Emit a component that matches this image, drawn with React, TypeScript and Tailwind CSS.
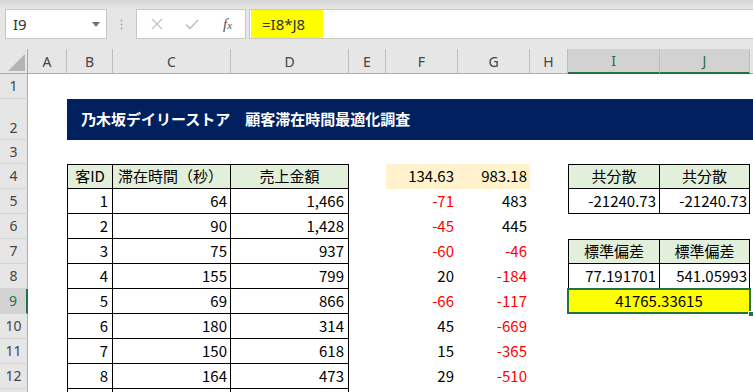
import React from 'react';

const GRID = 'grid grid-cols-[28px_39px_46px_118px_118px_37px_72px_72px_38px_92px_90px_3px]';
const JP = "font-['Noto_Sans_CJK_JP','Noto_Sans',sans-serif]";
const UI = "font-['Noto_Sans','Open_Sans',sans-serif]";

const rows = [
  { id: '1', sec: '64', amt: '1,466', f: '-71', g: '483' },
  { id: '2', sec: '90', amt: '1,428', f: '-45', g: '445' },
  { id: '3', sec: '75', amt: '937', f: '-60', g: '-46' },
  { id: '4', sec: '155', amt: '799', f: '20', g: '-184' },
  { id: '5', sec: '69', amt: '866', f: '-66', g: '-117' },
  { id: '6', sec: '180', amt: '314', f: '45', g: '-669' },
  { id: '7', sec: '150', amt: '618', f: '15', g: '-365' },
  { id: '8', sec: '164', amt: '473', f: '29', g: '-510' },
];

const Cell = ({
  children,
  className = '',
  color = 'text-black',
}: {
  children?: React.ReactNode;
  className?: string;
  color?: string;
}) => (
  <div className={`flex items-center overflow-hidden whitespace-nowrap ${JP} text-[15px] ${color} ${className}`}>
    {children}
  </div>
);

const RowHead = ({ n, selected = false, tall = false }: { n: string; selected?: boolean; tall?: boolean }) => (
  <div
    className={`flex justify-center ${tall ? 'items-end pb-[1px]' : 'items-center'} border-b border-[#d4d4d4] ${UI} text-[14px] leading-[20px] ${
      selected ? 'bg-[#d2d2d2] text-[#217346] border-r-2 border-r-[#217346]' : 'bg-[#e6e6e6] text-[#444] border-r border-r-[#ababab]'
    }`}
  >
    {n}
  </div>
);

const neg = (v: string) => (v.startsWith('-') ? 'text-[#ff0000]' : 'text-black');

const ColHead = ({ l, selected = false }: { l: string; selected?: boolean }) => (
  <div
    className={`flex items-center justify-center border-r border-[#bdbdbd] ${UI} text-[14px] ${
      selected ? 'bg-[#d2d2d2] text-[#217346] border-b-2 border-b-[#217346]' : 'bg-[#e6e6e6] text-[#444] border-b border-b-[#ababab]'
    }`}
  >
    {l}
  </div>
);

export default function App() {
  return (
    <div className="w-[753px] h-[392px] overflow-hidden bg-white">
      {/* formula bar */}
      <div className="h-[49px] bg-[#e6e6e6] flex flex-col">
        <div className="h-[9px] bg-linear-to-b from-[#d6d6d6] to-[#e6e6e6]" />
        <div className="flex items-start h-[30px]">
          <div className="ml-[5px] w-[102px] h-[30px] bg-white border border-[#c6c6c6] flex items-center justify-between pl-[7px] pr-[6px]">
            <span className={`${UI} text-[15px] text-[#333]`}>I9</span>
            <svg width="8" height="5" viewBox="0 0 8 5">
              <path d="M0 0h8L4 5z" fill="#737373" />
            </svg>
          </div>
          <div className="w-[29px] h-[30px] flex items-center justify-center">
            <svg width="3" height="11" viewBox="0 0 3 11">
              <circle cx="1.5" cy="1.5" r="1" fill="#a6a6a6" />
              <circle cx="1.5" cy="5.5" r="1" fill="#a6a6a6" />
              <circle cx="1.5" cy="9.5" r="1" fill="#a6a6a6" />
            </svg>
          </div>
          <div className="w-[110px] h-[30px] bg-white border border-[#c6c6c6] flex items-center pl-[14px]">
            <svg width="12" height="12" viewBox="0 0 12 12">
              <path d="M1 1l10 10M11 1L1 11" stroke="#c2c2c2" strokeWidth="1.4" />
            </svg>
            <svg className="ml-[22px]" width="14" height="11" viewBox="0 0 14 11">
              <path d="M1 5.5l4 4L13 1" stroke="#c2c2c2" strokeWidth="1.6" fill="none" />
            </svg>
            <span className="ml-[24px] font-['Liberation_Serif',serif] italic text-[15px] text-[#555] leading-none">
              f<span className="text-[11px]">x</span>
            </span>
          </div>
          <div className="ml-[3px] flex-1 h-[30px] bg-white border border-r-0 border-[#c6c6c6] pl-[1px] flex">
            <div className="w-[72px] h-full bg-[#ffff00] flex items-center pl-[11px]">
              <span className={`${UI} text-[15px] text-[#333]`}>=I8*J8</span>
            </div>
          </div>
        </div>
      </div>

      {/* column headers */}
      <div className={`${GRID} h-[25px]`}>
        <div className="bg-[#e6e6e6] border-r border-b border-[#ababab] relative">
          <svg className="absolute left-[8px] top-[5px]" width="17" height="17" viewBox="0 0 17 17">
            <path d="M17 0v17H0z" fill="#b4b4b4" />
          </svg>
        </div>
        {['A', 'B', 'C', 'D', 'E', 'F', 'G', 'H'].map((l) => (
          <ColHead key={l} l={l} />
        ))}
        <ColHead l="I" selected />
        <ColHead l="J" selected />
        <div className="bg-[#e6e6e6] border-b border-[#ababab]" />
      </div>

      {/* row 1 */}
      <div className={`${GRID} h-[25px]`}>
        <RowHead n="1" />
        <div className="col-span-11" />
      </div>

      {/* row 2 title */}
      <div className={`${GRID} h-[41px]`}>
        <RowHead n="2" tall />
        <div />
        <div className="col-span-10 bg-[#002060] flex items-center pl-[14px]">
          <span className={`${JP} text-[15px] font-bold text-white whitespace-nowrap`}>
            乃木坂デイリーストア　顧客滞在時間最適化調査
          </span>
        </div>
      </div>

      {/* row 3 */}
      <div className={`${GRID} h-[24px]`}>
        <RowHead n="3" />
        <div className="col-span-11" />
      </div>

      {/* row 4 headers */}
      <div className={`${GRID} h-[25px]`}>
        <RowHead n="4" />
        <div />
        <Cell className="bg-[#e2efda] border border-black justify-center">客ID</Cell>
        <Cell className="bg-[#e2efda] border-t border-r border-b border-black pl-[5px]">滞在時間（秒）</Cell>
        <Cell className="bg-[#e2efda] border-t border-r border-b border-black justify-center">売上金額</Cell>
        <div />
        <Cell className="bg-[#fff2cc] justify-end pr-[4px]">134.63</Cell>
        <Cell className="bg-[#fff2cc] justify-end pr-[3px]">983.18</Cell>
        <div />
        <Cell className="bg-[#e2efda] border border-black justify-center">共分散</Cell>
        <Cell className="bg-[#e2efda] border-t border-r border-b border-black justify-center">共分散</Cell>
        <div />
      </div>

      {/* rows 5-12 */}
      {rows.map((r, i) => {
        const n = i + 5;
        return (
          <div key={n} className={`${GRID} h-[25px]`}>
            <RowHead n={String(n)} selected={n === 9} />
            <div />
            <Cell className="border-l border-r border-b border-black justify-end pr-[4px]">{r.id}</Cell>
            <Cell className="border-r border-b border-black justify-end pr-[3px]">{r.sec}</Cell>
            <Cell className="border-r border-b border-black justify-end pr-[4px]">{r.amt}</Cell>
            <div />
            <Cell className="justify-end pr-[4px]" color={neg(r.f)}>{r.f}</Cell>
            <Cell className="justify-end pr-[3px]" color={neg(r.g)}>{r.g}</Cell>
            <div />
            {n === 5 && (
              <>
                <Cell className="border-l border-r border-b border-black justify-end pr-[3px]">-21240.73</Cell>
                <Cell className="border-r border-b border-black justify-end pr-[2px]">-21240.73</Cell>
              </>
            )}
            {n === 7 && (
              <>
                <Cell className="bg-[#e2efda] border border-black justify-center">標準偏差</Cell>
                <Cell className="bg-[#e2efda] border-t border-r border-b border-black justify-center">標準偏差</Cell>
              </>
            )}
            {n === 8 && (
              <>
                <Cell className="border-l border-r border-b border-black justify-end pr-[3px]">77.191701</Cell>
                <Cell className="border-r border-b border-black justify-end pr-[2px]">541.05993</Cell>
              </>
            )}
            {n === 9 && (
              <div className="col-span-2 relative">
                <Cell className="h-full bg-[#ffff00] justify-center">41765.33615</Cell>
                <div className="absolute -left-[1px] -top-[1px] -right-[1px] bottom-0 border-2 border-[#217346]" />
                <div className="absolute -right-[4px] -bottom-[3px] w-[6px] h-[6px] bg-[#217346] border border-white" />
              </div>
            )}
            {n !== 5 && n !== 7 && n !== 8 && n !== 9 && <div className="col-span-2" />}
            <div />
          </div>
        );
      })}

      {/* row 13 (cut off at window edge) */}
      <div className={`${GRID} h-[25px]`}>
        <RowHead n="" />
        <div />
        <div className="border-l border-r border-black" />
        <div className="border-r border-black" />
        <div className="border-r border-black" />
        <div className="col-span-7" />
      </div>
    </div>
  );
}
